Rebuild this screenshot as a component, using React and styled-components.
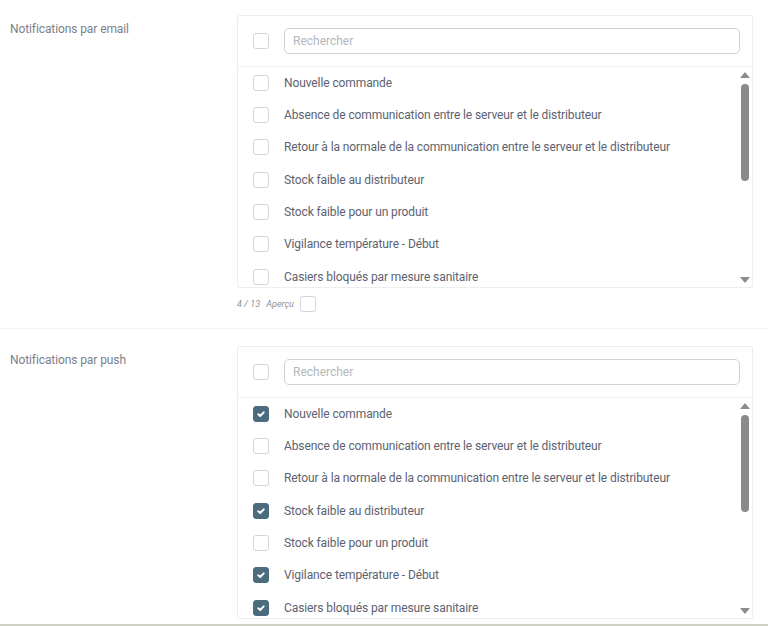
import React from "react";
import styled, { createGlobalStyle } from "styled-components";

const Global = createGlobalStyle`
  html, body { margin: 0; padding: 0; background: #fff; }
  body { font-family: Roboto, "Liberation Sans", sans-serif; }
  * { box-sizing: border-box; }
`;

const Page = styled.div`
  height: 626px;
  display: flex;
  flex-direction: column;
  overflow: hidden;
`;

const Content = styled.div`
  flex: 1;
  overflow: hidden;
`;

const BottomBar = styled.div`
  height: 2px;
  flex-shrink: 0;
  background: #cfd0c6;
`;

const Section = styled.section`
  display: grid;
  grid-template-columns: 237px 516px;
  padding: ${(p) => (p.$first ? "15px" : "17px")} 15px 16px 0;
  border-bottom: 1px solid #f1f2f3;
`;

const Label = styled.div`
  padding: 7px 0 0 10px;
  font-size: 12px;
  letter-spacing: -0.1px;
  color: #7b8089;
`;

const Field = styled.div`
  display: flex;
  flex-direction: column;
`;

const Panel = styled.div`
  border: 1px solid #eceef0;
  border-radius: 2px;
  display: flex;
  flex-direction: column;
`;

const Header = styled.div`
  height: 51px;
  display: flex;
  align-items: center;
  gap: 15px;
  padding: 0 12px 0 15px;
  border-bottom: 1px solid #eef0f2;
`;

const Box = styled.span`
  width: 16px;
  height: 16px;
  flex-shrink: 0;
  border-radius: 3px;
  border: 1px solid ${(p) => (p.$checked ? "#4a6c7d" : "#d2d5da")};
  background: ${(p) => (p.$checked ? "#4a6c7d" : "#fff")};
  display: inline-flex;
  align-items: center;
  justify-content: center;
`;

const Search = styled.input`
  flex: 1;
  height: 26px;
  border: 1px solid #cfd3d8;
  border-radius: 5px;
  padding: 0 8px;
  font-family: inherit;
  font-size: 12px;
  color: #5b6270;
  outline: none;
  &::placeholder { color: #b3b7bd; }
`;

const ListArea = styled.div`
  height: 220px;
  display: flex;
`;

const List = styled.ul`
  flex: 1;
  list-style: none;
  margin: 0;
  padding: 0;
  overflow: hidden;
`;

const Item = styled.li`
  height: 32.33px;
  display: flex;
  align-items: center;
  gap: 15px;
  padding: 0 0 1px 15px;
  font-size: 12px;
  letter-spacing: -0.1px;
  color: #5c6270;
  white-space: nowrap;
`;

const ScrollBar = styled.div`
  width: 15px;
  display: flex;
  flex-direction: column;
  align-items: center;
  padding: 4px 0 3px 0;
`;

const Arrow = styled.div`
  width: 0;
  height: 0;
  border-left: 5px solid transparent;
  border-right: 5px solid transparent;
  ${(p) =>
    p.$down
      ? "border-top: 6px solid #8c8c8c;"
      : "border-bottom: 6px solid #8c8c8c;"}
  margin: 1px 0;
`;

const Track = styled.div`
  flex: 1;
  width: 100%;
  display: flex;
  justify-content: center;
  padding-top: 5px;
`;

const Thumb = styled.div`
  width: 8px;
  height: 97px;
  border-radius: 4px;
  background: #8a8a8a;
`;

const Footer = styled.div`
  display: flex;
  align-items: center;
  gap: 6px;
  padding-top: 8px;
  font-size: 9px;
  font-style: italic;
  color: #8b8f96;
`;

const Count = styled.span`
  letter-spacing: 0.1px;
`;

const Check = () => (
  <svg width="10" height="10" viewBox="0 0 10 10">
    <path d="M2.3 5.2 L4.2 7 L7.7 3.3" fill="none" stroke="#fff" strokeWidth="1.9" strokeLinecap="round" strokeLinejoin="round" />
  </svg>
);

const ITEMS = [
  "Nouvelle commande",
  "Absence de communication entre le serveur et le distributeur",
  "Retour à la normale de la communication entre le serveur et le distributeur",
  "Stock faible au distributeur",
  "Stock faible pour un produit",
  "Vigilance température - Début",
  "Casiers bloqués par mesure sanitaire",
];

const Checkbox = ({ checked }) => <Box $checked={checked}>{checked && <Check />}</Box>;

const Selector = ({ label, checked, first, count }) => (
  <Section $first={first}>
    <Label>{label}</Label>
    <Field>
      <Panel>
        <Header>
          <Checkbox />
          <Search placeholder="Rechercher" />
        </Header>
        <ListArea>
          <List>
            {ITEMS.map((t, i) => (
              <Item key={t}>
                <Checkbox checked={checked.includes(i)} />
                {t}
              </Item>
            ))}
          </List>
          <ScrollBar>
            <Arrow />
            <Track>
              <Thumb />
            </Track>
            <Arrow $down />
          </ScrollBar>
        </ListArea>
      </Panel>
      {count && (
        <Footer>
          <Count>{count}</Count>
          <span>Aperçu</span>
          <Checkbox />
        </Footer>
      )}
    </Field>
  </Section>
);

export default function App() {
  return (
    <Page>
      <Global />
      <Content>
        <Selector first label="Notifications par email" checked={[]} count="4 / 13" />
        <Selector label="Notifications par push" checked={[0, 3, 5, 6]} />
      </Content>
      <BottomBar />
    </Page>
  );
}
